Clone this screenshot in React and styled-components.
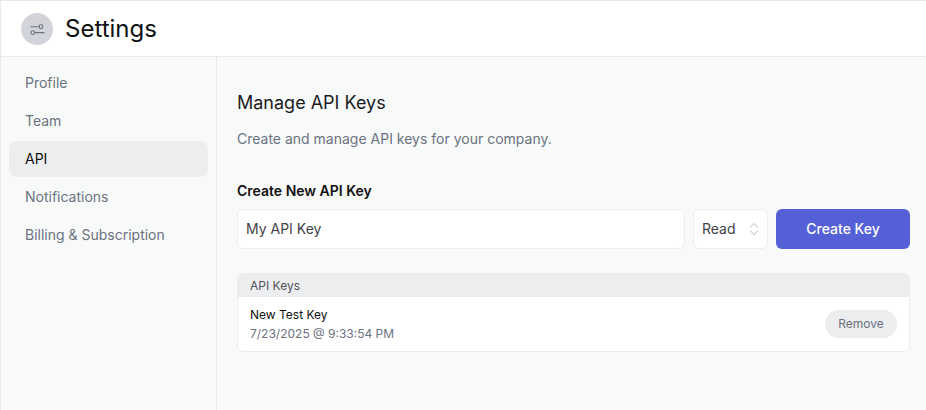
import React from 'react';
import styled, { createGlobalStyle } from 'styled-components';

const GlobalStyle = createGlobalStyle`
  * { box-sizing: border-box; }
  html, body { margin: 0; height: 100%; }
  body {
    font-family: Inter, "Liberation Sans", sans-serif;
    background: #f8fafa;
    overflow: hidden;
  }
`;

const Page = styled.div`
  width: 926px;
  height: 410px;
  display: flex;
  flex-direction: column;
  border-top: 1px solid #e8e9eb;
  border-left: 1px solid #e8e9eb;
`;

const Header = styled.header`
  height: 56px;
  flex-shrink: 0;
  display: flex;
  align-items: center;
  gap: 12px;
  padding-left: 20px;
  background: #fff;
  border-bottom: 1px solid #e8e9eb;
`;

const IconCircle = styled.div`
  width: 32px;
  height: 32px;
  border-radius: 50%;
  background: #d3d4d9;
  display: flex;
  align-items: center;
  justify-content: center;
  color: #6b7280;
`;

const Title = styled.h1`
  margin: 0;
  font-size: 24px;
  font-weight: 400;
  color: #111;
`;

const Body = styled.div`
  flex: 1;
  display: flex;
  min-height: 0;
`;

const Sidebar = styled.nav`
  width: 216px;
  flex-shrink: 0;
  padding: 8px 8px;
  display: flex;
  flex-direction: column;
  gap: 2px;
  border-right: 1px solid #e8e9eb;
`;

const NavItem = styled.div`
  height: 36px;
  display: flex;
  align-items: center;
  padding-left: 16px;
  padding-bottom: 1px;
  border-radius: 8px;
  font-size: 14px;
  color: ${props => (props.$active ? '#111' : '#6b7280')};
  background: ${props => (props.$active ? '#ecedef' : 'transparent')};
`;

const Main = styled.main`
  flex: 1;
  padding: 36px 16px 0 20px;
`;

const Heading = styled.h2`
  margin: 0;
  font-size: 18px;
  line-height: 20px;
  font-weight: 400;
  color: #1c1c1f;
`;

const Description = styled.p`
  margin: 16px 0 0;
  font-size: 14px;
  line-height: 20px;
  color: #6b7280;
`;

const FormLabel = styled.div`
  margin-top: 32px;
  font-size: 14px;
  line-height: 20px;
  font-weight: 600;
  color: #111;
`;

const FormRow = styled.div`
  margin-top: 8px;
  display: flex;
  gap: 8px;
`;

const NameInput = styled.input`
  flex: 1;
  min-width: 0;
  height: 40px;
  padding: 0 8px 1px;
  border: 1px solid #ecedef;
  border-radius: 6px;
  background: #fff;
  font: inherit;
  font-size: 14px;
  color: #3f3f46;
  outline: none;
`;

const SelectBox = styled.div`
  width: 75px;
  height: 40px;
  display: flex;
  align-items: center;
  justify-content: space-between;
  padding: 0 8px 1px;
  border: 1px solid #ecedef;
  border-radius: 6px;
  background: #fff;
  font-size: 14px;
  color: #3f3f46;
`;

const CreateButton = styled.button`
  width: 134px;
  height: 40px;
  padding: 0 0 2px;
  border: none;
  border-radius: 6px;
  background: #5660d6;
  color: #fff;
  font: inherit;
  font-size: 14px;
  font-weight: 500;
`;

const KeysCard = styled.section`
  margin-top: 24px;
  border: 1px solid #ecedef;
  border-radius: 6px;
  background: #fff;
  overflow: hidden;
`;

const KeysHeader = styled.div`
  height: 23px;
  display: flex;
  align-items: center;
  padding-left: 12px;
  background: #ecedef;
  font-size: 12px;
  color: #52525b;
`;

const KeyRow = styled.div`
  height: 54px;
  display: flex;
  align-items: center;
  justify-content: space-between;
  padding: 0 12px;
`;

const KeyName = styled.div`
  font-size: 12px;
  line-height: 19px;
  color: #111;
`;

const KeyDate = styled.div`
  font-size: 12px;
  line-height: 19px;
  color: #6b7280;
`;

const RemoveButton = styled.button`
  width: 72px;
  height: 28px;
  padding: 0 0 2px;
  border: none;
  border-radius: 14px;
  background: #ecedef;
  color: #6b7280;
  font: inherit;
  font-size: 12px;
  font-weight: 400;
`;

const SlidersIcon = () => (
  <svg width="16" height="16" viewBox="0 0 16 16" fill="none" stroke="currentColor" strokeWidth="1.1" strokeLinecap="round">
    <circle cx="12" cy="5.7" r="1.9" />
    <circle cx="3.8" cy="11.6" r="1.9" />
    <path d="M1.8 5.7h8.3M5.7 11.6H15" />
  </svg>
);

const ChevronsIcon = () => (
  <svg width="10" height="14" viewBox="0 0 10 14" fill="none" stroke="#d6d7da" strokeWidth="1.2" strokeLinecap="round" strokeLinejoin="round">
    <path d="M1.5 5 5 1.5 8.5 5M1.5 9 5 12.5 8.5 9" />
  </svg>
);

export default function App() {
  return (
    <Page>
      <GlobalStyle />
      <Header>
        <IconCircle><SlidersIcon /></IconCircle>
        <Title>Settings</Title>
      </Header>
      <Body>
        <Sidebar>
          <NavItem>Profile</NavItem>
          <NavItem>Team</NavItem>
          <NavItem $active>API</NavItem>
          <NavItem>Notifications</NavItem>
          <NavItem>Billing &amp; Subscription</NavItem>
        </Sidebar>
        <Main>
          <Heading>Manage API Keys</Heading>
          <Description>Create and manage API keys for your company.</Description>
          <FormLabel>Create New API Key</FormLabel>
          <FormRow>
            <NameInput defaultValue="My API Key" />
            <SelectBox>Read <ChevronsIcon /></SelectBox>
            <CreateButton>Create Key</CreateButton>
          </FormRow>
          <KeysCard>
            <KeysHeader>API Keys</KeysHeader>
            <KeyRow>
              <div>
                <KeyName>New Test Key</KeyName>
                <KeyDate>7/23/2025 @ 9:33:54 PM</KeyDate>
              </div>
              <RemoveButton>Remove</RemoveButton>
            </KeyRow>
          </KeysCard>
        </Main>
      </Body>
    </Page>
  );
}
